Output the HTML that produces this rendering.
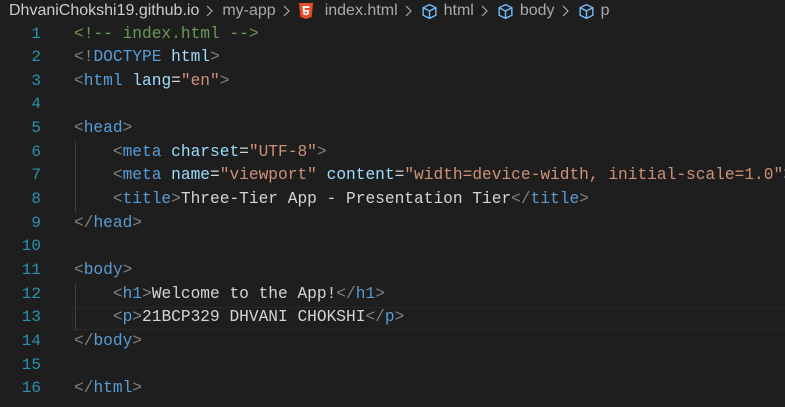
<!DOCTYPE html>
<html><head><style>
body{margin:0;background:#1e1e1e;width:785px;height:407px;overflow:hidden;position:relative}
.bc{position:absolute;top:0;left:9px;height:22px;font:16px "Liberation Sans",sans-serif;color:#a9a9a9;display:flex;align-items:center;white-space:nowrap}
.bc .f{color:#cccccc}
.sep{margin:0 9px 0 7px;display:inline-block}
.bc svg.i{margin-right:6px}
.ln{position:absolute;left:0;width:41px;text-align:right;color:#2b91af;font:16px "Liberation Mono",monospace}
.cd{position:absolute;left:74px;font:16.2px "Liberation Mono",monospace;color:#d4d4d4}
.l{height:23.67px;line-height:23.67px;white-space:pre}
.g{color:#808080}.t{color:#569cd6}.a{color:#9cdcfe}.s{color:#ce9178}.c{color:#6a9955}
.guide{position:absolute;left:75px;width:1px;background:#404040}
.cur{position:absolute;left:72px;right:0;top:306.7px;height:21.6px;border:1px solid #282828;border-right:none}
</style></head><body>
<div class="bc"><span class="f">DhvaniChokshi19.github.io</span><svg class="sep" width="7" height="12" viewBox="0 0 7 12"><path d="M1 1l5 5-5 5" stroke="#a9a9a9" stroke-width="1.2" fill="none"/></svg>my-app<svg class="sep" width="7" height="12" viewBox="0 0 7 12"><path d="M1 1l5 5-5 5" stroke="#a9a9a9" stroke-width="1.2" fill="none"/></svg>
<svg class="i" width="14" height="16" viewBox="0 0 14 16"><path d="M0 0h14l-1.3 14L7 16 1.3 14z" fill="#e44d26"/><path d="M3.5 3h7l-.2 2H5.6l.2 2h4.3l-.4 4.3L7 12.3l-2.7-1 -.2-2h1.8l.1 1L7 10.7l1-.4.1-1.5H4z" fill="#fff"/></svg><span style="margin-left:6px">index.html</span><svg class="sep" width="7" height="12" viewBox="0 0 7 12"><path d="M1 1l5 5-5 5" stroke="#a9a9a9" stroke-width="1.2" fill="none"/></svg>
<svg class="i" width="17" height="17" viewBox="0 0 16 16" fill="none" stroke="#75beff" stroke-width="1.3"><path d="M8 1.5l6 3v7l-6 3-6-3v-7z M2 4.5l6 3 6-3 M8 7.5v7"/></svg>html<svg class="sep" width="7" height="12" viewBox="0 0 7 12"><path d="M1 1l5 5-5 5" stroke="#a9a9a9" stroke-width="1.2" fill="none"/></svg>
<svg class="i" width="17" height="17" viewBox="0 0 16 16" fill="none" stroke="#75beff" stroke-width="1.3"><path d="M8 1.5l6 3v7l-6 3-6-3v-7z M2 4.5l6 3 6-3 M8 7.5v7"/></svg>body<svg class="sep" width="7" height="12" viewBox="0 0 7 12"><path d="M1 1l5 5-5 5" stroke="#a9a9a9" stroke-width="1.2" fill="none"/></svg>
<svg class="i" width="17" height="17" viewBox="0 0 16 16" fill="none" stroke="#75beff" stroke-width="1.3"><path d="M8 1.5l6 3v7l-6 3-6-3v-7z M2 4.5l6 3 6-3 M8 7.5v7"/></svg>p</div>
<div class="cur"></div>
<div class="guide" style="top:141px;height:71px"></div>
<div class="guide" style="top:283.5px;height:47px"></div>
<div class="ln" style="top:22.5px"><div class="l">1</div><div class="l">2</div><div class="l">3</div><div class="l">4</div><div class="l">5</div><div class="l">6</div><div class="l">7</div><div class="l">8</div><div class="l">9</div><div class="l">10</div><div class="l">11</div><div class="l">12</div><div class="l">13</div><div class="l">14</div><div class="l">15</div><div class="l">16</div></div>
<div class="cd" style="top:22.5px"><div class="l c">&lt;!-- index.html --&gt;</div><div class="l"><span class="g">&lt;!</span><span class="t">DOCTYPE</span> <span class="a">html</span><span class="g">&gt;</span></div><div class="l"><span class="g">&lt;</span><span class="t">html</span> <span class="a">lang</span>=<span class="s">"en"</span><span class="g">&gt;</span></div><div class="l"> </div><div class="l"><span class="g">&lt;</span><span class="t">head</span><span class="g">&gt;</span></div><div class="l">    <span class="g">&lt;</span><span class="t">meta</span> <span class="a">charset</span>=<span class="s">"UTF-8"</span><span class="g">&gt;</span></div><div class="l">    <span class="g">&lt;</span><span class="t">meta</span> <span class="a">name</span>=<span class="s">"viewport"</span> <span class="a">content</span>=<span class="s">"width=device-width, initial-scale=1.0"</span><span class="g">&gt;</span></div><div class="l">    <span class="g">&lt;</span><span class="t">title</span><span class="g">&gt;</span>Three-Tier App - Presentation Tier<span class="g">&lt;/</span><span class="t">title</span><span class="g">&gt;</span></div><div class="l"><span class="g">&lt;/</span><span class="t">head</span><span class="g">&gt;</span></div><div class="l"> </div><div class="l"><span class="g">&lt;</span><span class="t">body</span><span class="g">&gt;</span></div><div class="l">    <span class="g">&lt;</span><span class="t">h1</span><span class="g">&gt;</span>Welcome to the App!<span class="g">&lt;/</span><span class="t">h1</span><span class="g">&gt;</span></div><div class="l">    <span class="g">&lt;</span><span class="t">p</span><span class="g">&gt;</span>21BCP329 DHVANI CHOKSHI<span class="g">&lt;/</span><span class="t">p</span><span class="g">&gt;</span></div><div class="l"><span class="g">&lt;/</span><span class="t">body</span><span class="g">&gt;</span></div><div class="l"> </div><div class="l"><span class="g">&lt;/</span><span class="t">html</span><span class="g">&gt;</span></div></div>
</body></html>
